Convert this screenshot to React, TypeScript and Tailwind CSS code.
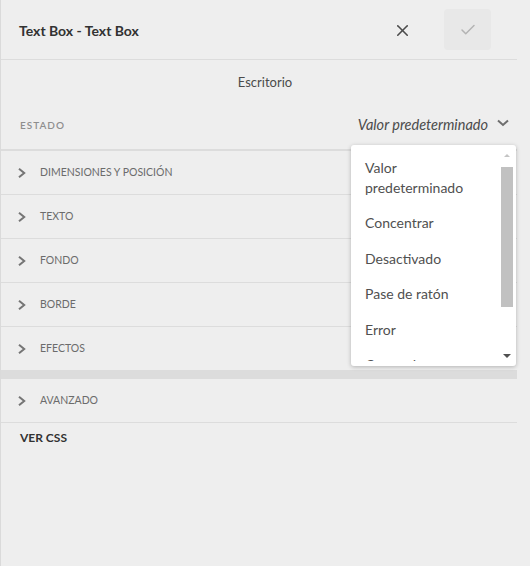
import { X, Check } from 'lucide-react';

const sections = ['DIMENSIONES Y POSICIÓN', 'TEXTO', 'FONDO', 'BORDE', 'EFECTOS'];
const states = ['Valor predeterminado', 'Concentrar', 'Desactivado', 'Pase de ratón', 'Error', 'Cargando'];

function Chevron() {
  return (
    <svg width="8" height="10" viewBox="0 0 8 10" className="text-[#757575]" aria-hidden>
      <polyline points="1,0.8 6.2,5 1,9.2" fill="none" stroke="currentColor" strokeWidth="2" />
    </svg>
  );
}

function SectionRow({ label, last }: { label: string; last?: boolean }) {
  return (
    <div className={`flex items-center pl-[17px] ${last ? 'h-[43px]' : 'h-[44px] border-b border-[#dcdcdc]'}`}>
      <Chevron />
      <span className="ml-[14px] text-[10.5px] text-[#6b6b6b]">{label}</span>
    </div>
  );
}

export default function App() {
  return (
    <div
      className="relative w-[530px] h-[566px] bg-[#eeeeee] border-l border-[#dadada] flex"
      style={{ fontFamily: 'Lato, "Open Sans", sans-serif' }}
    >
      <div className="w-[516px] flex flex-col">
        {/* Header */}
        <div className="h-[60px] flex items-center pl-[18px] pr-[26px] pt-[2px] border-b border-[#dcdcdc]">
          <h1 className="flex-1 text-[14px] font-bold text-[#323232]">Text Box - Text Box</h1>
          <button type="button" className="w-[30px] h-[30px] flex items-center justify-center text-[#4b4b4b] mr-[27px]">
            <X className="w-[19px] h-[19px]" strokeWidth={2} aria-hidden />
          </button>
          <button type="button" className="w-[47px] h-[41px] -mt-[2px] rounded-[4px] bg-[#e8e8e8] flex items-center justify-center text-[#b3b3b3]">
            <Check className="w-[18px] h-[18px]" strokeWidth={2} aria-hidden />
          </button>
        </div>

        {/* Breakpoint */}
        <div className="h-[44px] flex items-center justify-center pl-[12px] pt-[2px] text-[13px] text-[#4b4b4b]">Escritorio</div>

        {/* State */}
        <div className="h-[47px] flex items-center pl-[19px] pr-[8px] border-b-2 border-[#dcdcdc]">
          <span className="flex-1 -mt-[3px] text-[10px] font-semibold tracking-[1px] text-[#8e8e8e]">ESTADO</span>
          <span className="text-[14.5px] italic text-[#4b4b4b] -mt-[4px]">Valor predeterminado</span>
          <svg width="12" height="8" viewBox="0 0 12 8" className="ml-[9px] -mt-[8px] text-[#6e6e6e]" aria-hidden>
            <polyline points="1,1.5 6,6 11,1.5" fill="none" stroke="currentColor" strokeWidth="2" />
          </svg>
        </div>

        {sections.map((s, i) => (
          <SectionRow key={s} label={s} last={i === sections.length - 1} />
        ))}

        <div className="h-[9px] bg-[#dcdcdc]" />

        <SectionRow label="AVANZADO" />

        <div className="h-[30px] flex items-center pl-[19px] text-[12px] font-bold text-[#323232]">VER CSS</div>
      </div>

      {/* State dropdown */}
      <div className="absolute left-[350px] top-[145px] w-[165px] h-[221px] bg-white rounded-[3px] shadow-[0_1px_4px_rgba(0,0,0,0.25)] flex overflow-hidden">
        <ul className="flex-1 h-[216px] pl-[14px] pt-[5px] overflow-hidden">
          {states.map((s) => (
            <li key={s} className="w-[120px] py-[7.75px] text-[14px] leading-[20px] text-[#505050]">{s}</li>
          ))}
        </ul>
        <div className="w-[16px] flex flex-col items-center py-[4px] pr-[2px]">
          <div className="h-[12px] flex items-center justify-center">
            <div className="w-0 h-0 border-l-[3px] border-r-[3px] border-b-[3px] border-l-transparent border-r-transparent border-b-[#c4c4c4]" />
          </div>
          <div className="mt-[6px] w-[12px] h-[140px] bg-[#c1c1c1]" />
          <div className="flex-1" />
          <div className="h-[12px] flex items-center justify-center">
            <div className="w-0 h-0 border-l-[4px] border-r-[4px] border-t-[4px] border-l-transparent border-r-transparent border-t-[#505050]" />
          </div>
        </div>
      </div>
    </div>
  );
}
